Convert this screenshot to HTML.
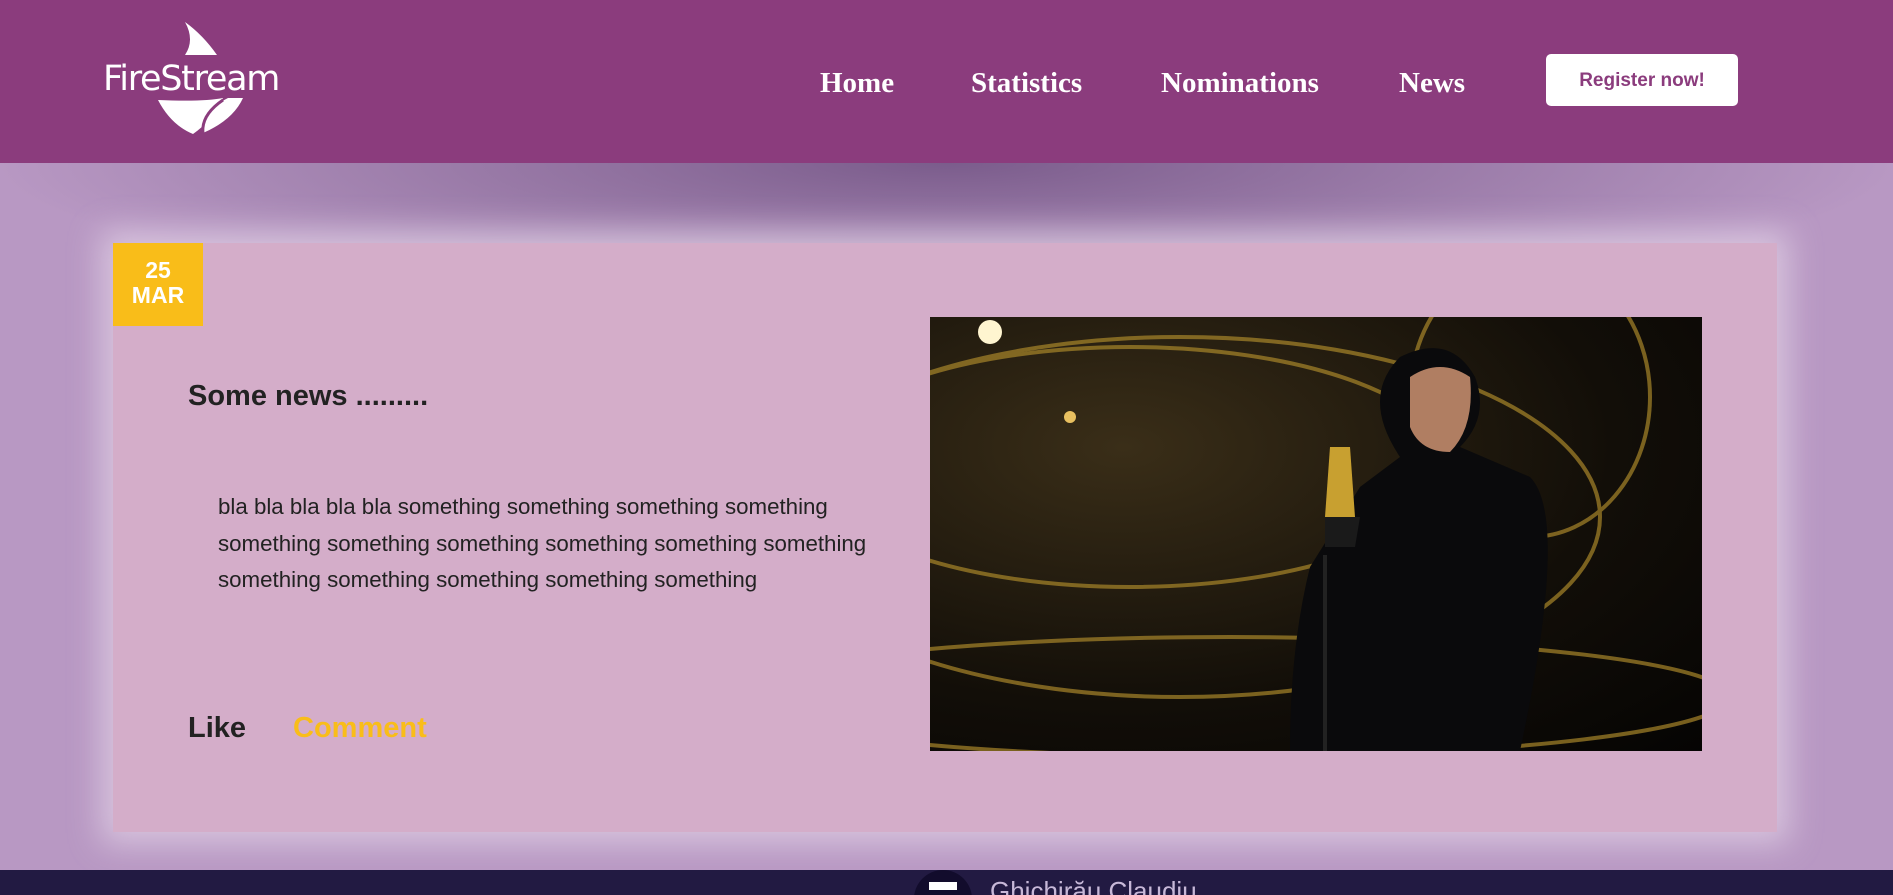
<!DOCTYPE html>
<html><head><meta charset="utf-8"><style>
*{margin:0;padding:0;box-sizing:border-box}
html,body{width:1893px;height:895px;overflow:hidden}
body{background:#b898c3;font-family:"Liberation Sans",sans-serif;position:relative}
.bg{position:absolute;left:0;top:163px;width:1893px;height:707px;background:radial-gradient(ellipse 950px 140px at 946px 0px,rgba(90,60,110,.65),rgba(90,60,110,0));}
header{position:absolute;left:0;top:0;width:1893px;height:163px;background:#8b3c7d;z-index:2}
.logo{position:absolute;left:103px;top:20px}
.logo span{position:absolute;left:0;top:39px;color:#fff;font-family:"DejaVu Sans","Liberation Sans",sans-serif;font-size:35px;letter-spacing:-1.3px;white-space:nowrap}
nav a{position:absolute;top:67px;color:#fff;font-family:"Liberation Serif",serif;font-weight:bold;font-size:29px;text-decoration:none}
.btn{position:absolute;left:1546px;top:54px;width:192px;height:52px;background:#fff;border-radius:5px;color:#8b3c7d;font-size:19px;font-weight:bold;text-align:center;line-height:54px}
.card{position:absolute;left:113px;top:243px;width:1664px;height:589px;background:#d4adc9;box-shadow:0 0 30px 12px rgba(225,210,230,.75)}
.date{position:absolute;left:0;top:0;width:90px;height:83px;background:#f9bd19;color:#fff;font-weight:bold;font-size:23px;text-align:center;line-height:25px;padding-top:15px}
h2{position:absolute;left:75px;top:137px;font-size:29px;color:#222;font-weight:bold}
p{position:absolute;left:105px;top:246px;width:700px;font-size:22.3px;line-height:36.5px;color:#222}
.like{position:absolute;left:75px;top:469px;font-size:29px;font-weight:bold;color:#222}
.cmt{position:absolute;left:180px;top:469px;font-size:29px;font-weight:bold;color:#f9bd19}
.img{position:absolute;left:817px;top:74px;width:772px;height:434px;overflow:hidden;background:radial-gradient(ellipse at 25% 30%,#3a2e18,#120e08 60%,#050403)}
footer{position:absolute;left:0;top:870px;width:1893px;height:25px;background:#221a42}
.circ{position:absolute;left:914px;top:870px;width:58px;height:58px;border-radius:50%;background:#120c2c}
.fn{position:absolute;left:990px;top:876px;color:#c7b8d8;font-size:26px}
</style></head><body>
<div class="bg"></div>
<header>
<div class="logo">
<svg width="190" height="120" style="position:absolute;left:0;top:0">
<path d="M82 2 Q100 15 114 35 L82 35 Q92 20 82 2Z" fill="#fff"/>
<path d="M55 80 Q100 82 120 78 Q110 100 90 114 Q68 105 55 80Z" fill="#fff"/>
<path d="M100 113 Q100 90 125 78 L140 78 Q130 100 100 113Z" fill="#fff"/>
<path d="M100 113 Q98 95 120 80" stroke="#8b3c7d" stroke-width="3" fill="none"/>
</svg>
<span>FireStream</span>
</div>
<nav><a style="left:820px">Home</a><a style="left:971px">Statistics</a><a style="left:1161px">Nominations</a><a style="left:1399px">News</a></nav>
<div class="btn">Register now!</div>
</header>
<div class="card">
<div class="date">25<br>MAR</div>
<h2>Some news .........</h2>
<p>bla bla bla bla bla something something something something something something something something something something something something something something something</p>
<div class="like">Like</div><div class="cmt">Comment</div>
<div class="img">
<svg width="772" height="434">
<g fill="none" stroke="#a8862a" stroke-width="4" opacity=".7">
<ellipse cx="200" cy="150" rx="320" ry="120"/>
<ellipse cx="250" cy="200" rx="420" ry="180"/>
<ellipse cx="600" cy="80" rx="120" ry="140"/>
<ellipse cx="300" cy="380" rx="500" ry="60"/>
</g>
<circle cx="60" cy="15" r="12" fill="#fff5d0"/>
<circle cx="140" cy="100" r="6" fill="#e8c060"/>
<path d="M380 250 L430 170 L470 140 Q430 80 470 40 Q520 15 545 60 Q560 100 530 130 L600 160 Q640 200 590 434 L360 434 Q360 330 380 250Z" fill="#0a0a0c"/>
<path d="M480 60 Q510 40 540 60 Q545 110 520 135 Q490 135 480 110Z" fill="#b07e62"/>
<path d="M400 130 L420 130 L425 200 L395 200Z" fill="#c8a030"/>
<path d="M395 200 L430 200 L425 230 L395 230Z" fill="#1a1a1a"/>
<path d="M395 238 L395 434" stroke="#222" stroke-width="4"/>
</svg>
</div>
</div>
<footer></footer>
<div class="circ"><div style="position:absolute;left:15px;top:12px;width:28px;height:8px;background:#fff"></div></div>
<div class="fn">Ghichirău Claudiu</div>
</body></html>
